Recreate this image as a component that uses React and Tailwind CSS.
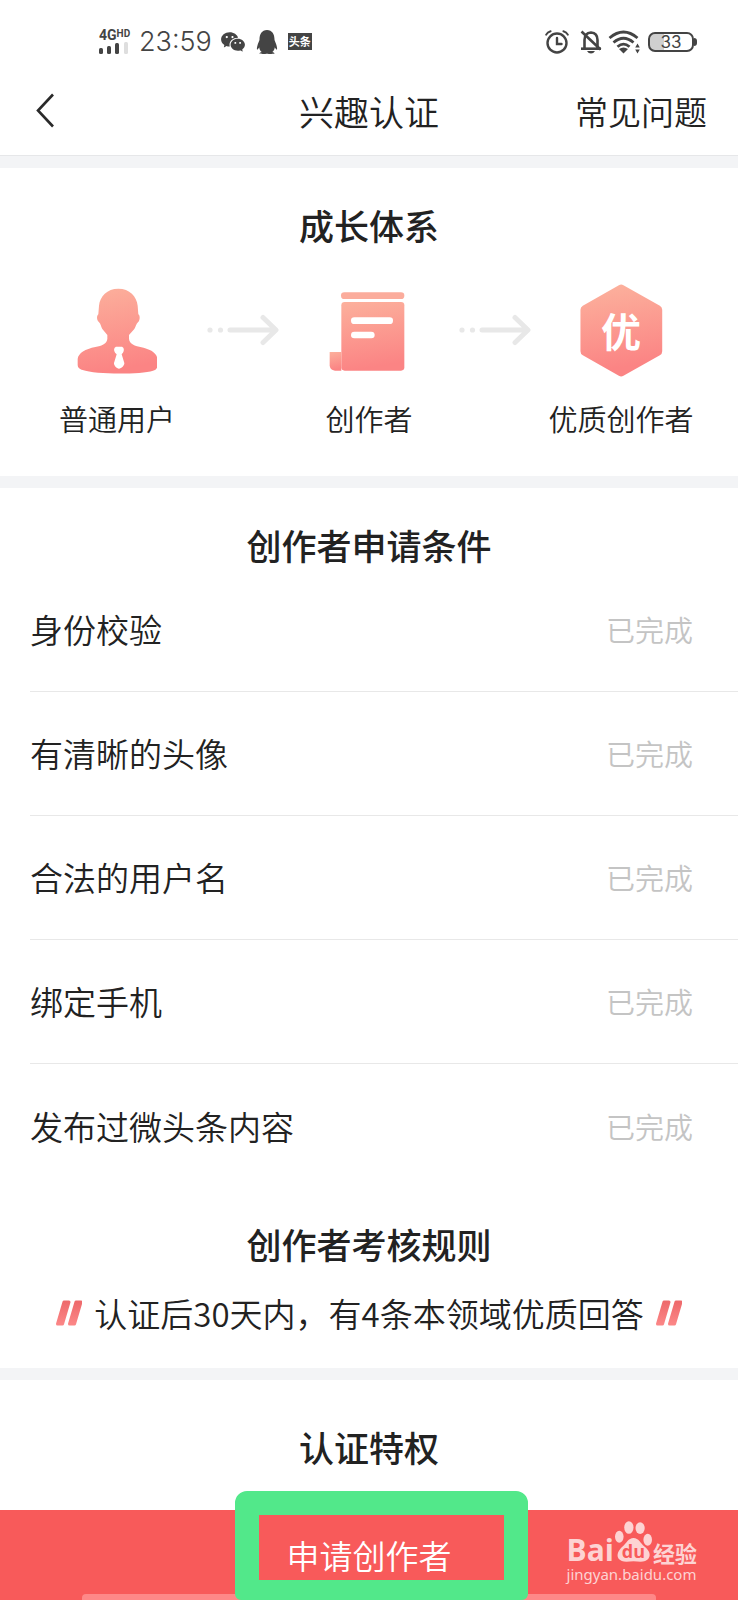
import { FaQq } from 'react-icons/fa';
import { RiWechatFill } from 'react-icons/ri';

const conditions = ['身份校验', '有清晰的头像', '合法的用户名', '绑定手机', '发布过微头条内容'];

function Signal() {
    return (
        <div className="w-8 text-[#444]">
            <p className="flex items-start font-['Roboto'] text-[14px] leading-[12px] font-bold">
                4G<span className="text-[10px] leading-[9px]">HD</span>
            </p>
            <svg viewBox="0 0 32 12" className="w-8 h-3 mt-px" fill="currentColor">
                <rect x="0" y="6" width="4" height="6" rx="1.5" />
                <rect x="8" y="4" width="4" height="8" rx="1.5" />
                <rect x="16" y="1" width="4" height="11" rx="1.5" />
                <rect x="25" y="0" width="4" height="12" rx="1.5" fill="#dedede" />
            </svg>
        </div>
    );
}

function StatusBar() {
    return (
        <div className="h-[75px] pt-2 pl-[99px] pr-[44px] flex items-center justify-between text-[#444]">
            <div className="flex items-center">
                <Signal />
                <span className="ml-2 font-['Inter'] text-[27px] leading-8">23:59</span>
                <RiWechatFill className="ml-2 w-[26px] h-[26px]" />
                <FaQq className="ml-[10px] w-[22px] h-[24px]" />
                <span className="ml-[10px] w-6 h-[17px] bg-[#444] text-white text-[11px] leading-[17px] font-bold text-center">
                    头条
                </span>
            </div>
            <div className="flex items-center">
                <svg viewBox="0 0 24 24" className="w-6 h-6" fill="none" stroke="currentColor" strokeWidth="2.4" strokeLinecap="round">
                    <circle cx="12" cy="13" r="9.5" />
                    <path d="M12 8v6h4.5" />
                    <path d="M1.2 4.6Q2.6 2 5.6 1.2M22.8 4.6Q21.4 2 18.4 1.2" strokeWidth="2" />
                </svg>
                <svg viewBox="0 0 22 24" className="w-[22px] h-6 ml-[11px]" fill="none" stroke="currentColor" strokeWidth="2.6">
                    <path d="M4.5 18.5V10q0-7 6.5-7.5 6.5.5 6.5 7.5v8.5" />
                    <path d="M1 18.7h20" />
                    <path d="M7 21h8q-1.5 2.5-4 2.500T7 21z" fill="currentColor" stroke="none" />
                    <path d="M1.5 1.5 20.5 19.5" />
                </svg>
                <svg viewBox="0 0 32 24" className="w-8 h-6 ml-[6px]" fill="none" stroke="currentColor" strokeWidth="2.8">
                    <path d="M1.5 8Q15.500-4 29.5 8" />
                    <path d="M5.5 12.5Q15.5 4 25.5 12.5" />
                    <path d="M9.5 16.8Q15.5 11.5 21.5 16.8" />
                    <path d="M11 19Q15.5 16 20 19L15.500 23.500z" fill="currentColor" stroke="none" />
                    <path d="M29.5 13.5l2.300 4h-4.600zM29.5 23.5l2.300-4h-4.600z" fill="currentColor" stroke="none" />
                </svg>
                <div className="relative ml-2 w-[46px] h-5 border-2 border-[#444] rounded-[7px] bg-[linear-gradient(to_right,#cfcfcf_33%,#fff_33%)]">
                    <p className="font-['Inter'] font-normal text-[17px] leading-4 text-center">33</p>
                    <span className="absolute -right-[5px] top-[4px] w-[3px] h-2 rounded-r bg-[#444]"></span>
                </div>
            </div>
        </div>
    );
}

function Header() {
    return (
        <header className="h-[81px] pb-2 px-[31px] grid grid-cols-3 items-center border-b border-[#e6e7e9]">
            <button type="button" aria-label="返回" className="w-fit px-1">
                <svg viewBox="0 0 20 36" className="w-5 h-9" fill="none" stroke="#2a2a2a" strokeWidth="2.6">
                    <path d="M18 1.5 3 17.5 18 33.5" />
                </svg>
            </button>
            <h1 className="text-[35px] leading-[44px] text-center whitespace-nowrap">兴趣认证</h1>
            <a href="#faq" className="text-[33px] leading-[44px] text-right whitespace-nowrap">
                常见问题
            </a>
        </header>
    );
}

function Title({ children }) {
    return <h2 className="text-[35px] leading-[44px] font-medium text-center">{children}</h2>;
}

function Gradient({ id }) {
    return (
        <defs>
            <linearGradient id={id} x1="0" y1="0" x2="0.15" y2="1">
                <stop offset="0" stopColor="#fcb09c" />
                <stop offset="1" stopColor="#fb8484" />
            </linearGradient>
        </defs>
    );
}

function UserIcon() {
    return (
        <svg viewBox="110 49 240 264" className="w-20 h-22">
            <Gradient id="user" />
            <path
                fill="url(#user)"
                d="M234 57C268 57 289 80 292 108L294 134C300 138 299 152 293 158C288 162 286 172 282 178L266 196V207C267 222 282 228 300 232C330 238 350 250 351 268V290C350 298 345 301 338 303C300 315 165 315 127 301C118 298 113 296 112 286V268C114 250 135 238 165 232C185 228 200 222 201 207V196L186 178C182 172 181 162 176 158C169 152 168 140 174 134L176 108C179 80 200 57 234 57Z"
            />
            <path
                fill="#fff"
                d="M229 231H243C249 231 252 238 250 244C249 249 246 251 244 254L252 280C253 287 243 297 236 297C229 297 220 287 221 280L229 254C226 251 223 249 222 244C220 238 223 231 229 231Z"
            />
        </svg>
    );
}

function CreatorIcon() {
    return (
        <svg viewBox="118 58 240 252" className="w-20 h-21">
            <Gradient id="creator" />
            <rect x="154" y="71" width="190" height="20" rx="10" fill="#fbac9c" />
            <rect x="155" y="100" width="189" height="206" rx="10" fill="url(#creator)" />
            <path d="M120 250H155V306H136Q120 304 120 290Z" fill="url(#creator)" />
            <rect x="184" y="146" width="126" height="20" rx="10" fill="#fff" />
            <rect x="184" y="189" width="71" height="20" rx="10" fill="#fff" />
        </svg>
    );
}

function QualityIcon() {
    return (
        <div className="relative">
            <svg viewBox="148 42 250 281" className="w-[83px] h-[93px]">
                <Gradient id="quality" />
                <path
                    d="M272 58 382 120V245L272 307 163 245V120Z"
                    fill="url(#quality)"
                    stroke="url(#quality)"
                    strokeWidth="28"
                    strokeLinejoin="round"
                />
            </svg>
            <span className="absolute inset-0 flex items-center justify-center text-white text-[40px] leading-none font-bold">
                优
            </span>
        </div>
    );
}

function Arrow() {
    return (
        <div className="h-24 flex items-center">
            <svg viewBox="0 0 72 32" className="w-[72px] h-8" fill="none" stroke="#e8e8e8" strokeWidth="5" strokeLinecap="round" strokeLinejoin="round">
                <circle cx="3" cy="16" r="2.6" fill="#e8e8e8" stroke="none" />
                <circle cx="13.5" cy="16" r="2.6" fill="#e8e8e8" stroke="none" />
                <path d="M23 16H68M56 3.5 69 16 56 28.5" />
            </svg>
        </div>
    );
}

function Stage({ icon, name }) {
    return (
        <div className="w-36 flex flex-col items-center">
            <div className="h-24 flex items-center">{icon}</div>
            <p className="mt-5 text-[29px] leading-10 whitespace-nowrap">{name}</p>
        </div>
    );
}

function Quote() {
    return (
        <svg viewBox="0 0 26 26" className="w-[26px] h-[26px] shrink-0">
            <defs>
                <linearGradient id="quote" x1="0" y1="0" x2="0" y2="1">
                    <stop offset="0" stopColor="#ee6a6c" />
                    <stop offset="1" stopColor="#fb8686" />
                </linearGradient>
            </defs>
            <path
                d="M8 2H13L6.500 24H1.500ZM20 2H25L18.500 24H13.500Z"
                fill="url(#quote)"
                stroke="url(#quote)"
                strokeWidth="3"
                strokeLinejoin="round"
            />
        </svg>
    );
}

function Watermark() {
    return (
        <div className="absolute right-[41px] top-[10px] text-[#fdd3d3]">
            <div className="flex items-end h-[43px]">
                <span className="font-['Open_Sans'] text-[30px] leading-[26px] font-bold">Bai</span>
                <span className="relative">
                    <svg viewBox="272 90 118 129" className="w-[39px] h-[43px]" fill="currentColor">
                        <ellipse cx="288" cy="140" rx="13" ry="18" />
                        <ellipse cx="317" cy="112" rx="14" ry="19" />
                        <ellipse cx="351" cy="114" rx="14" ry="18" />
                        <ellipse cx="374" cy="149" rx="13" ry="18" />
                        <path d="M331 144C347 144 352 160 364 170C380 183 384 196 376 207C368 218 350 216 331 214C312 216 294 218 286 207C279 196 284 183 298 170C310 160 315 144 331 144Z" />
                    </svg>
                    <span className="absolute inset-x-0 bottom-1 text-center font-['Open_Sans'] text-[18px] leading-4 font-bold text-[#f85a5a]">
                        du
                    </span>
                </span>
                <span className="pb-px text-[22px] leading-5 font-bold">经验</span>
            </div>
            <p className="mt-px font-['Noto_Sans'] font-normal text-[15px] leading-5">jingyan.baidu.com</p>
        </div>
    );
}

function Footer() {
    return (
        <footer className="sticky bottom-0 h-[90px] bg-[#f85a5a]">
            <button type="button" className="w-full h-full text-white text-[33px] leading-[44px]">
                申请创作者
            </button>
            <Watermark />
            <div className="absolute bottom-0 inset-x-[82px] h-[6px] rounded-t bg-[#fe8888]"></div>
            <div className="absolute left-1/2 -ml-[134px] -top-[19px] bottom-0 w-[293px] border-[24px] border-b-[20px] border-[#52e88a] rounded-t-[12px] rounded-b-[6px]"></div>
        </footer>
    );
}

export default function App() {
    return (
        <div className="min-h-screen flex flex-col bg-white text-[#222] font-['Noto_Sans_CJK_SC',sans-serif] font-[350]">
            <StatusBar />
            <Header />
            <main className="flex-1 flex flex-col gap-3 bg-[#f3f4f6] pt-3">
                <section className="bg-white pt-[35px] pb-[38px]">
                    <Title>成长体系</Title>
                    <div className="mt-[35px] px-[45px] flex justify-between">
                        <Stage icon={<UserIcon />} name="普通用户" />
                        <Arrow />
                        <Stage icon={<CreatorIcon />} name="创作者" />
                        <Arrow />
                        <Stage icon={<QualityIcon />} name="优质创作者" />
                    </div>
                </section>
                <section className="bg-white pt-[35px] pb-[35px]">
                    <Title>创作者申请条件</Title>
                    <ul className="pt-px pl-[30px]">
                        {conditions.map((name) => (
                            <li
                                key={name}
                                className="h-31 pr-[45px] pb-px flex items-center justify-between border-b border-[#e8e8e8] last:border-b-0"
                            >
                                <span className="text-[33px] leading-[44px]">{name}</span>
                                <span className="text-[29px] leading-10 text-[#c4c4c4]">已完成</span>
                            </li>
                        ))}
                    </ul>
                    <div className="pt-[34px]">
                        <Title>创作者考核规则</Title>
                        <div className="mt-[27px] flex items-center justify-center gap-3">
                            <Quote />
                            <p className="text-[33px] leading-10">认证后30天内，有4条本领域优质回答</p>
                            <Quote />
                        </div>
                    </div>
                </section>
                <section className="flex-1 bg-white pt-[45px] pb-10">
                    <Title>认证特权</Title>
                </section>
            </main>
            <Footer />
        </div>
    );
}
